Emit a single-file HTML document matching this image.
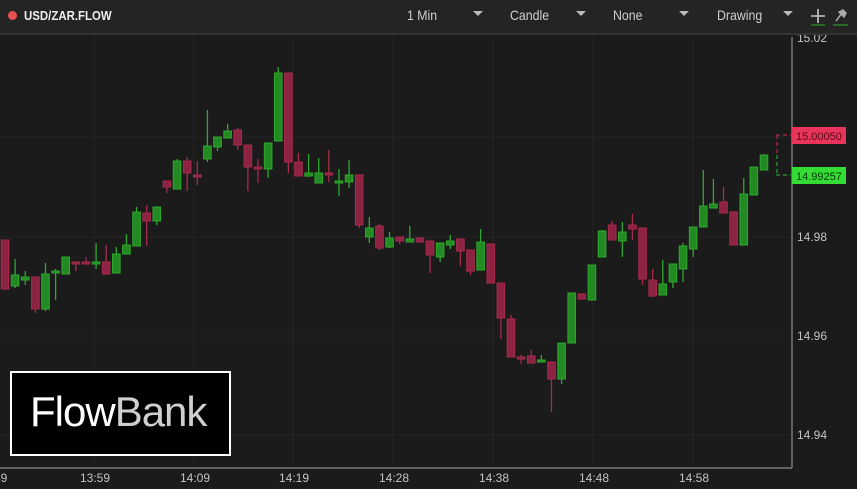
<!DOCTYPE html>
<html><head><meta charset="utf-8"><style>
html,body{margin:0;padding:0;background:#1b1b1b;width:857px;height:489px;overflow:hidden;font-family:"Liberation Sans",sans-serif}
#hd{position:absolute;left:0;top:0;width:857px;height:33px;background:#242424;border-bottom:2px solid #333}
.t{position:absolute;top:7px;color:#cfcfcf;font-size:14px;transform:scaleX(0.88);transform-origin:left}
.ar{position:absolute;top:11px;width:0;height:0;border-left:5px solid transparent;border-right:5px solid transparent;border-top:5px solid #bbb}
</style></head><body>
<div id="hd">
<div style="position:absolute;left:8px;top:11px;width:9px;height:9px;border-radius:50%;background:#e85050"></div>
<div class="t" style="left:24px;font-weight:bold;color:#eee;font-size:13px;top:8px">USD/ZAR.FLOW</div>
<div class="t" style="left:407px">1 Min</div><div class="ar" style="left:473px"></div>
<div class="t" style="left:510px">Candle</div><div class="ar" style="left:576px"></div>
<div class="t" style="left:613px">None</div><div class="ar" style="left:679px"></div>
<div class="t" style="left:717px">Drawing</div><div class="ar" style="left:783px"></div>
<svg style="position:absolute;left:808px;top:6px" width="45" height="20">
<path d="M10 3v14M3 10h14" stroke="#ccc" stroke-width="1.6"/><path d="M3 19h14" stroke="#2a9a2a" stroke-width="1.2"/>
<path d="M28 15l6-8M31 6l4 -2 3 3-2 4z" stroke="#aaa" stroke-width="1.5" fill="#aaa"/><path d="M25 19h15" stroke="#2a9a2a" stroke-width="1.2"/>
</svg>
</div>
<svg id="c" style="position:absolute;left:0;top:35px" width="857" height="454" viewBox="0 35 857 454">
<g stroke="#262626" stroke-width="1">
<path d="M94 35V467M194 35V467M293 35V467M393 35V467M493 35V467M593 35V467M693 35V467M0 137H791M0 237H791M0 336H791M0 435H791"/>
</g>
<g id="cd"></g>
<path d="M792 37V468M0 468H792" stroke="#777" stroke-width="1.5"/>
<g fill="#c4c4c4" font-size="12">
<text x="797" y="42">15.02</text><text x="797" y="241">14.98</text><text x="797" y="340">14.96</text><text x="797" y="439">14.94</text>
<text x="-6" y="482">49</text><text x="80" y="482">13:59</text><text x="180" y="482">14:09</text><text x="279" y="482">14:19</text><text x="379" y="482">14:28</text><text x="479" y="482">14:38</text><text x="579" y="482">14:48</text><text x="679" y="482">14:58</text>
</g>
<path d="M776 135H791M777 135V155" stroke="#b0284a" stroke-width="1.3" stroke-dasharray="4 3" fill="none"/>
<path d="M776 175H791M777 155V175" stroke="#2a9a2a" stroke-width="1.3" stroke-dasharray="4 3" fill="none"/>
<rect x="792" y="127" width="54" height="17" fill="#e8335a"/><text x="796" y="140" font-size="11" fill="#5a0a1a">15.00050</text>
<rect x="792" y="167" width="54" height="17" fill="#33dd33"/><text x="796" y="180" font-size="11" fill="#0a3a0a">14.99257</text>
<rect x="11" y="372" width="219" height="83" fill="#000" stroke="#fff" stroke-width="2"/>
<text x="30" y="426" font-size="42" fill="#fff" style="letter-spacing:-1px">Flow<tspan fill="#cfcfcf">Bank</tspan></text>
</svg>
<script>
var d=[[240,289,240,289,'r'],[275,286,259,288,'g'],[277,280,271,285,'g'],[277,309,277,313,'r'],[274,309,263,311,'g'],[271,272,269,300,'g'],[257,274,257,274,'g'],[262,263,262,271,'r'],[262,263,257,264,'r'],[262,264,243,269,'g'],[262,274,245,274,'r'],[254,273,247,273,'g'],[245,254,234,254,'g'],[212,246,207,246,'g'],[213,221,205,246,'r'],[207,221,207,225,'g'],[181,187,181,193,'r'],[161,189,159,189,'g'],[161,173,157,191,'r'],[175,177,161,185,'r'],[146,159,110,162,'g'],[137,147,137,151,'g'],[131,138,124,138,'g'],[130,145,128,150,'r'],[145,167,145,191,'r'],[167,169,159,183,'r'],[143,169,143,178,'g'],[73,141,67,141,'g'],[73,162,73,173,'r'],[162,176,153,176,'r'],[173,176,154,177,'g'],[173,183,158,183,'g'],[173,175,150,182,'r'],[181,182,169,196,'g'],[175,182,160,188,'g'],[175,225,175,228,'r'],[228,237,217,243,'g'],[226,248,224,250,'r'],[238,247,232,248,'g'],[237,241,237,244,'r'],[239,242,226,242,'g'],[238,242,238,242,'r'],[241,255,241,273,'r'],[243,257,243,262,'g'],[241,245,235,249,'g'],[239,251,239,266,'r'],[250,271,250,275,'r'],[242,270,229,270,'g'],[244,283,244,283,'r'],[283,318,283,339,'r'],[319,357,315,357,'r'],[357,359,355,364,'r'],[356,363,350,363,'r'],[360,362,355,362,'g'],[362,379,362,412,'r'],[343,379,343,384,'g'],[293,343,293,343,'g'],[294,299,293,299,'r'],[265,300,265,300,'g'],[231,257,230,257,'g'],[225,240,221,240,'r'],[232,241,222,257,'g'],[225,229,214,240,'r'],[228,279,228,285,'r'],[280,296,269,297,'r'],[284,295,260,295,'g'],[264,282,264,288,'g'],[246,269,243,282,'g'],[227,249,227,257,'g'],[206,227,170,227,'g'],[204,208,179,208,'g'],[202,213,187,213,'r'],[212,245,212,245,'r'],[194,245,178,245,'g'],[167,195,167,195,'g'],[155,170,154,170,'g']];
var s='';d.forEach(function(c,i){var x=5+i*10.12;var g=c[4]=='g';var f=g?'#238a23':'#8c2342',st=g?'#2ea82e':'#a82a4c';
s+='<line x1="'+x+'" x2="'+x+'" y1="'+c[2]+'" y2="'+c[3]+'" stroke="'+st+'" stroke-width="1.3"/>';
var h=Math.max(c[1]-c[0],2);s+='<rect x="'+(x-3.8)+'" y="'+c[0]+'" width="7.6" height="'+h+'" fill="'+f+'" stroke="'+st+'" stroke-width="1"/>';});
document.getElementById('cd').innerHTML=s;
</script>
</body></html>
